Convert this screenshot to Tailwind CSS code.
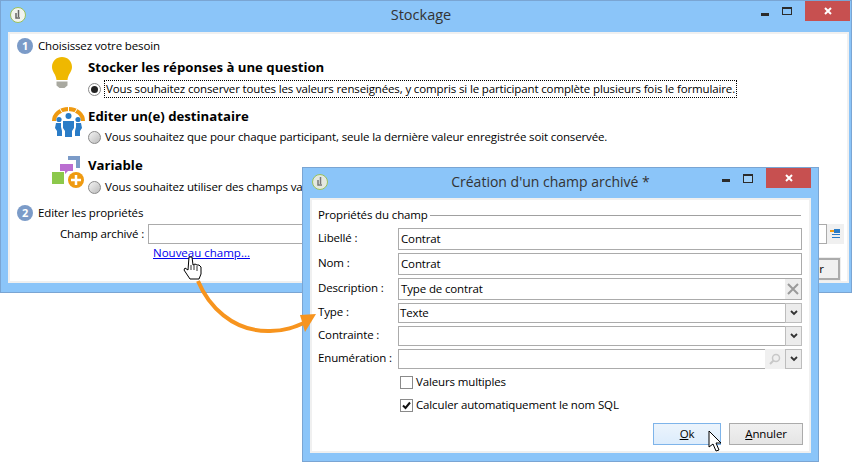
<!DOCTYPE html>
<html lang="fr">
<head>
  <meta charset="UTF-8">
  <title>Stockage</title>
  <script src="https://cdn.jsdelivr.net/npm/@tailwindcss/browser@4"></script>
</head>
<body class="bg-white">
  <div class="relative w-[853px] h-[474px] overflow-hidden bg-white text-[11.5px] tracking-[-0.14px] leading-4 text-black font-['Open_Sans',sans-serif]">

    <!-- fenetre arriere -->
    <section class="absolute left-0 top-0 w-[852px] h-[293px] flex flex-col bg-[#8bc5f9] border border-[#7aa5d3]">
      <header class="h-[31px] flex items-center relative shrink-0">
        <svg class="ml-[9px] -mt-[3px] w-4 h-4" viewBox="0 0 16 16"><circle cx="8" cy="8" r="7.500" fill="#f2f4ee" stroke="#9ac05a"/><path d="M8.500 3v7M6 6v5h4" fill="none" stroke="#666" stroke-width="1.500"/></svg>
        <h1 class="absolute inset-x-0 -mt-[3px] pr-[10px] text-center text-[14.5px] tracking-normal text-[#333]">Stockage</h1>
        <div class="ml-auto flex items-start self-start">
          <span class="w-[8px] h-[3px] mt-[12px] mr-[13px] bg-[#2b2b2b]"></span>
          <span class="w-[10px] h-[8px] mt-[6px] mr-[13px] border border-t-2 border-[#2b2b2b]"></span>
          <span class="w-[45px] h-[20px] bg-[#c75050] mr-[1px] flex items-center justify-center">
            <svg class="w-2 h-2" viewBox="0 0 8 8"><path d="M1 1l6 6M7 1l-6 6" stroke="#fff" stroke-width="2"/></svg>
          </span>
        </div>
      </header>
      <div class="mx-[7px] w-[841px] h-[251px] bg-white border-2 border-[#f0f0f0] relative shrink-0">
        <div class="pl-[7px] pt-[4px]">
          <div class="flex items-center gap-[5px] h-4">
            <span class="w-4 h-4 rounded-full bg-[#7b9bc8] text-white text-[11px] font-bold flex items-center justify-center">1</span>
            <span>Choisissez votre besoin</span>
          </div>

          <div class="flex mt-[2px] ml-[35px]">
            <svg class="w-[36px] h-[36px] shrink-0" viewBox="0 0 36 36"><path d="M10 1c-5.500 0-10 4-10 10 0 5 4 7 4.500 13h11c.5-6 4.500-8 4.500-13 0-6-4.500-10-10-10z" fill="#efb800"/><path d="M4.500 25.500h11v4l-3 2.500h-5l-3-2.500z" fill="#a9a9a0"/></svg>
            <div>
              <h2 class="font-bold text-[13.2px] tracking-normal leading-5 mt-[1px]">Stocker les réponses à une question</h2>
              <label class="flex items-center mt-[3px] h-[18px]">
                <span class="w-[13px] h-[13px] rounded-full border border-[#8a8a8a] bg-white flex items-center justify-center"><span class="w-[7px] h-[7px] rounded-full bg-[#222]"></span></span>
                <span class="ml-[3px] px-[1px] border border-dotted border-black h-[18px] flex items-center">Vous souhaitez conserver toutes les valeurs renseignées, y compris si le participant complète plusieurs fois le formulaire.</span>
              </label>
            </div>
          </div>

          <div class="flex mt-[8px] ml-[35px]">
            <svg class="w-[36px] h-[36px] shrink-0" viewBox="0 0 36 36"><path d="M0 15a16.500 14 0 0 1 33 0h-4a12.500 10 0 0 0-25 0z" fill="#ef9a11"/><path d="M8 3L12 9M25 3l-4 6M16.500 1v6" stroke="#fff" stroke-width="1"/><g fill="#2a7cc7"><circle cx="16.500" cy="10" r="3"/><circle cx="7" cy="13.500" r="2.600"/><circle cx="26" cy="13.500" r="2.600"/><path d="M11 15h11v7l-2 3v6h-7v-6l-2-3z"/><path d="M4 17h5v4l1 4v5H5v-5l-2-3z"/><path d="M29 17h-5v4l-1 4v5h5v-5l2-3z"/></g></svg>
            <div>
              <h2 class="font-bold text-[13.2px] tracking-normal leading-5">Editer un(e) destinataire</h2>
              <label class="flex items-center h-[22px]">
                <span class="w-[13px] h-[13px] rounded-full border border-[#8a8a8a] bg-linear-to-br from-[#f4f4f4] to-[#bbb]"></span>
                <span class="ml-1">Vous souhaitez que pour chaque participant, seule la dernière valeur enregistrée soit conservée.</span>
              </label>
            </div>
          </div>

          <div class="flex mt-[7px] ml-[35px]">
            <svg class="w-[36px] h-[36px] shrink-0" viewBox="0 0 36 36"><path d="M16 1h12v12h-4V5h-8z" fill="#7b9bc8"/><path d="M8 9h13v7h-5l-3 3v-3H8z" fill="#bb6ed1"/><rect x="0" y="17" width="12" height="12" fill="#8cc84b"/><circle cx="24" cy="25" r="8" fill="#ef9a11"/><path d="M24 20v10M19 25h10" stroke="#fff" stroke-width="2.500"/></svg>
            <div>
              <h2 class="font-bold text-[13.2px] tracking-normal leading-5">Variable</h2>
              <label class="flex items-center h-[22px] mt-[1px]">
                <span class="w-[13px] h-[13px] rounded-full border border-[#8a8a8a] bg-linear-to-br from-[#f4f4f4] to-[#bbb]"></span>
                <span class="ml-1">Vous souhaitez utiliser des champs variables</span>
              </label>
            </div>
          </div>

          <div class="flex items-center gap-[5px] h-4 mt-[7px]">
            <span class="w-4 h-4 rounded-full bg-[#7b9bc8] text-white text-[11px] font-bold flex items-center justify-center">2</span>
            <span>Editer les propriétés</span>
          </div>

          <div class="flex items-center mt-[3px] ml-[43px]">
            <span class="w-[88px] shrink-0">Champ archivé :</span>
            <span class="w-[679px] h-[20px] border border-[#ababab]"></span>
            <svg class="w-[17px] h-[20px] bg-[#f0f0f0]" viewBox="0 0 17 20"><rect x="3" y="6" width="4" height="2" fill="#f39c12"/><rect x="7" y="5" width="6" height="4" fill="#2a7cc7"/><path d="M5 10.500h8M5 13.500h8" stroke="#2a7cc7"/></svg>
          </div>

          <div class="flex items-start justify-between ml-[136px] mt-[1px] w-[687px]">
            <a href="#" class="underline text-[#0000ee] tracking-normal">Nouveau champ...</a>
            <button class="mt-[13px] w-[74px] h-[22px] border-2 border-[#ababab] outline outline-[#ededed] bg-[#f0f0f0] text-center">Annuler</button>
          </div>
        </div>
      </div>
    </section>

    <!-- fenetre de creation -->
    <section class="absolute left-[302px] top-[167px] w-[517px] h-[295px] flex flex-col bg-[#8bc5f9] border border-[#7aa5d3]">
      <header class="h-[30px] flex items-center relative shrink-0">
        <svg class="ml-[9px] -mt-[2px] w-4 h-4" viewBox="0 0 16 16"><circle cx="8" cy="8" r="7.500" fill="#e4e8e0" stroke="#9ac05a"/><path d="M8.500 3v7M6 6v5h4" fill="none" stroke="#777" stroke-width="1.500"/></svg>
        <h1 class="absolute inset-x-0 -mt-[3px] pr-[20px] text-center text-[14px] tracking-normal text-[#333]">Création d'un champ archivé *</h1>
        <div class="ml-auto flex items-start self-start">
          <span class="w-[8px] h-[3px] mt-[11px] mr-[13px] bg-[#2b2b2b]"></span>
          <span class="w-[10px] h-[9px] mt-[6px] mr-[13px] border border-t-2 border-[#2b2b2b] bg-[#9fd0fa]"></span>
          <span class="w-[45px] h-[20px] bg-[#c75050] mr-[7px] flex items-center justify-center">
            <svg class="w-2 h-2" viewBox="0 0 8 8"><path d="M1 1l6 6M7 1l-6 6" stroke="#fff" stroke-width="2"/></svg>
          </span>
        </div>
      </header>
      <div class="mx-[7px] w-[501px] h-[255px] bg-white border-2 border-[#f0f0f0] shrink-0 px-[6px]">
        <div class="flex items-center mt-[7px] h-4 w-[483px]">
          <span>Propriétés du champ</span>
          <span class="flex-1 h-px bg-[#a0a0a0] ml-[2px]"></span>
        </div>

        <div class="flex flex-col mt-[5px] w-[484px]">
          <div class="flex items-center h-[22px]">
            <span class="w-[80px] -mt-[2px]">Libellé :</span>
            <span class="flex-1 h-[22px] border border-[#ababab] flex items-center pl-[2px]">Contrat</span>
          </div>
          <div class="flex items-center h-[22px] mt-[3px]">
            <span class="w-[80px] -mt-[2px]">Nom :</span>
            <span class="flex-1 h-[22px] border border-[#ababab] flex items-center pl-[2px]">Contrat</span>
          </div>
          <div class="flex items-center h-[22px] mt-[3px]">
            <span class="w-[80px] -mt-[2px]">Description :</span>
            <span class="flex-1 h-[22px] border border-[#ababab] flex items-center pl-[2px]">
              Type de contrat
              <span class="ml-auto w-4 h-[20px] bg-[#ededed] flex items-center justify-center">
                <svg class="w-3 h-3" viewBox="0 0 12 12"><path d="M1 1l10 10M11 1L1 11" stroke="#9a9a9a" stroke-width="2"/></svg>
              </span>
            </span>
          </div>
          <div class="flex items-center h-[20px] mt-[3px]">
            <span class="w-[80px] -mt-[2px]">Type :</span>
            <span class="flex-1 h-[20px] border-y border-l border-[#ababab] flex items-center pl-[1px]">
              Texte
              <span class="ml-auto -my-px w-[17px] h-[20px] bg-[#ececec] border border-[#bdbdbd] flex items-center justify-center">
                <svg class="w-2 h-[6px]" viewBox="0 0 8 6"><path d="M1 1l3 3 3-3" fill="none" stroke="#333" stroke-width="1.800"/></svg>
              </span>
            </span>
          </div>
          <div class="flex items-center h-[20px] mt-[3px]">
            <span class="w-[80px] -mt-[2px]">Contrainte :</span>
            <span class="flex-1 h-[20px] border-y border-l border-[#ababab] flex items-center">
              <span class="ml-auto -my-px w-[17px] h-[20px] bg-[#ececec] border border-[#bdbdbd] flex items-center justify-center">
                <svg class="w-2 h-[6px]" viewBox="0 0 8 6"><path d="M1 1l3 3 3-3" fill="none" stroke="#333" stroke-width="1.800"/></svg>
              </span>
            </span>
          </div>
          <div class="flex items-center h-[20px] mt-[3px]">
            <span class="w-[80px] -mt-[2px]">Enumération :</span>
            <span class="w-[367px] h-[20px] border-y border-l border-[#ababab]"></span>
            <span class="w-5 h-[20px] bg-[#f0f0f0] flex items-center justify-center">
              <svg class="w-3 h-3" viewBox="0 0 12 12"><circle cx="7" cy="5" r="3.500" fill="none" stroke="#c8c8c8" stroke-width="1.500"/><path d="M4.500 7.500L1 11" stroke="#c8c8c8" stroke-width="2"/></svg>
            </span>
            <span class="w-[17px] h-[20px] bg-[#ececec] border border-[#bdbdbd] flex items-center justify-center">
              <svg class="w-2 h-[6px]" viewBox="0 0 8 6"><path d="M1 1l3 3 3-3" fill="none" stroke="#333" stroke-width="1.800"/></svg>
            </span>
          </div>
        </div>

        <label class="flex items-center h-[14px] mt-[6px] ml-[82px]">
          <span class="w-[13px] h-[13px] border border-[#8a8a8a] bg-white"></span>
          <span class="ml-[3px]">Valeurs multiples</span>
        </label>
        <label class="flex items-center h-[14px] mt-[9px] ml-[82px]">
          <span class="w-[13px] h-[13px] border border-[#8a8a8a] bg-white flex items-center justify-center">
            <svg class="w-[9px] h-[9px]" viewBox="0 0 9 9"><path d="M1 4.500l2.500 2.500L8 1.500" fill="none" stroke="#111" stroke-width="2"/></svg>
          </span>
          <span class="ml-[3px]">Calculer automatiquement le nom SQL</span>
        </label>

        <div class="flex justify-end gap-2 mt-[11px] w-[485px]">
          <button class="w-[68px] h-[22px] border border-[#7eb4ea] bg-linear-to-b from-[#ecf4fc] to-[#dcecfc] text-center"><u>O</u>k</button>
          <button class="w-[74px] h-[22px] border border-[#ababab] bg-linear-to-b from-[#f0f0f0] to-[#e5e5e5] text-center"><u>A</u>nnuler</button>
        </div>
      </div>
    </section>

    <!-- fleche orange -->
    <svg class="absolute inset-0 pointer-events-none" width="853" height="474" viewBox="0 0 853 474">
      <path d="M198 281C208 305 232 332 270 331C285 331 295 327 306 322" fill="none" stroke="#f7941e" stroke-width="4"/>
      <path d="M316 314L300 315L305 332z" fill="#f7941e"/>
      <!-- curseur main -->
      <path d="M189 257h3l1 8 2-1 2 1 2 0 2 2v7l-2 5h-9l-6-9 1-2 3 2z" fill="#fff" stroke="#000"/>
      <path d="M191 265v5M194 265v5M197 266v5" stroke="#000" stroke-width=".8"/>
      <!-- curseur fleche -->
      <path d="M709 431v16l4-3 3 7 3-1-3-7h5z" fill="#fff" stroke="#000"/>
    </svg>
  </div>
</body>
</html>
